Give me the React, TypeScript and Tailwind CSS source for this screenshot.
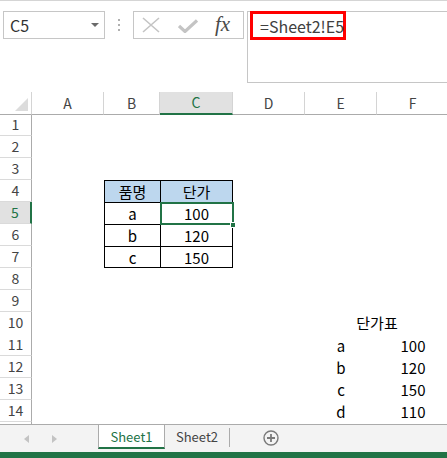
import React from "react";

const COLS = "grid grid-cols-[32px_72px_56px_73px_72px_72px_72px]";

type Cell = { text?: string; cls?: string };

function rowCells(n: number): Cell[] {
  const empty: Cell[] = [{}, {}, {}, {}, {}, {}];
  const tB = "border-l border-t border-black";
  const tC = "border-l border-r border-t border-black";
  if (n === 4)
    return [{}, { text: "품명", cls: tB + " bg-[#bdd7ee]" }, { text: "단가", cls: tC + " bg-[#bdd7ee]" }, {}, {}, {}];
  if (n === 5) return [{}, { text: "a", cls: tB }, { text: "100", cls: tC }, {}, {}, {}];
  if (n === 6) return [{}, { text: "b", cls: tB }, { text: "120", cls: tC }, {}, {}, {}];
  if (n === 7) return [{}, { text: "c", cls: tB + " border-b" }, { text: "150", cls: tC + " border-b" }, {}, {}, {}];
  const right: Record<number, [string, string]> = {
    11: ["a", "100"],
    12: ["b", "120"],
    13: ["c", "150"],
    14: ["d", "110"],
  };
  if (right[n]) return [{}, {}, {}, {}, { text: right[n][0] }, { text: right[n][1] }];
  return empty;
}

function Row({ n }: { n: number }) {
  const sel = n === 5;
  if (n === 10) {
    return (
      <div className={COLS + " h-[22px]"}>
        <RowHead n={n} sel={false} />
        <div />
        <div />
        <div />
        <div />
        <div className="col-span-2 flex items-center justify-center text-[15px] text-black">단가표</div>
      </div>
    );
  }
  const cells = rowCells(n);
  return (
    <div className={COLS + " h-[22px]"}>
      <RowHead n={n} sel={sel} />
      {cells.map((c, i) => (
        <div
          key={i}
          className={
            "relative flex items-center justify-center text-[15px] text-black leading-none " + (c.cls ?? "")
          }
        >
          {c.text}
          {sel && i === 2 && (
            <div className="absolute -left-px -top-px w-[74px] h-[23px] border-2 border-[#217346] z-10">
              <div className="absolute left-[68px] top-[18px] w-[6px] h-[6px] bg-[#217346] border border-white" />
            </div>
          )}
        </div>
      ))}
    </div>
  );
}

function RowHead({ n, sel }: { n: number; sel: boolean }) {
  return (
    <div
      className={
        "flex items-center justify-center text-[14px] border-b border-[#dadada] " +
        (sel
          ? "bg-[#e1e1e1] text-[#217346] border-r-2 border-r-[#217346]"
          : "bg-white text-[#444444] border-r border-r-[#ababab]")
      }
    >
      {n <= 14 ? n : ""}
    </div>
  );
}

function ColHead({ label, sel }: { label: string; sel?: boolean }) {
  return (
    <div
      className={
        "flex items-center justify-center text-[14px] " +
        (sel
          ? "bg-[#e1e1e1] text-[#217346] border-b-2 border-[#217346] border-r border-r-[#d4d4d4]"
          : "bg-white text-[#444444] border-b border-[#ababab] border-r border-r-[#d4d4d4]")
      }
    >
      {label}
    </div>
  );
}

export default function App() {
  const rows = Array.from({ length: 15 }, (_, i) => i + 1);
  return (
    <div className="w-[447px] h-[458px] overflow-hidden bg-white font-['Noto_Sans_CJK_KR',sans-serif] flex flex-col">
      {/* Formula area */}
      <div className="h-[92px] shrink-0 border-t border-[#d5d5d5] flex items-start pt-[10px]">
        <div className="ml-[3px] w-[102px] h-[28px] border border-[#c6c6c6] flex items-center justify-between pl-[6px] pr-[5px]">
          <span className="text-[16px] text-[#333333] leading-none">C5</span>
          <svg width="8" height="4" viewBox="0 0 8 4">
            <polygon points="0,0 8,0 4,4" fill="#6a6a6a" />
          </svg>
        </div>
        <div className="ml-[13px] mt-[8px] flex flex-col gap-[3px]">
          <div className="w-[2px] h-[2px] bg-[#b0b0b0]" />
          <div className="w-[2px] h-[2px] bg-[#b0b0b0]" />
          <div className="w-[2px] h-[2px] bg-[#b0b0b0]" />
        </div>
        <div className="ml-[13px] w-[111px] h-[28px] border border-[#c6c6c6] flex items-center">
          <svg className="ml-[8px]" width="18" height="16" viewBox="0 0 18 16">
            <path d="M1 1 L17 15 M17 1 L1 15" stroke="#c4c4c4" strokeWidth="1.6" fill="none" />
          </svg>
          <svg className="ml-[18px] mt-[2px]" width="20" height="14" viewBox="0 0 20 14">
            <path d="M1 7 L7 12.5 L19 1.5" stroke="#c4c4c4" strokeWidth="3.2" fill="none" />
          </svg>
          <span className="ml-[17px] font-['Liberation_Serif',serif] italic text-[21px] leading-none text-[#4a4a4a] -mt-[2px]">
            fx
          </span>
        </div>
        <div className="relative ml-[3px] flex-1 h-[72px] border border-[#c6c6c6] border-r-0">
          <div className="absolute left-[2px] -top-px w-[96px] h-[29px] border-[3px] border-[#ff0000]" />
          <span className="absolute left-[12px] top-[4px] text-[16px] text-[#404040] leading-[20px]">=Sheet2!E5</span>
        </div>
      </div>

      {/* Column headers */}
      <div className={COLS + " h-[22px] shrink-0"}>
        <div className="relative bg-white border-b border-[#ababab] border-r border-r-[#d4d4d4]">
          <svg className="absolute right-[3px] bottom-[3px]" width="13" height="13" viewBox="0 0 13 13">
            <polygon points="13,0 13,13 0,13" fill="#dcdcdc" />
          </svg>
        </div>
        <ColHead label="A" />
        <ColHead label="B" />
        <ColHead label="C" sel />
        <ColHead label="D" />
        <ColHead label="E" />
        <ColHead label="F" />
      </div>

      {/* Rows */}
      <div className="h-[310px] shrink-0 overflow-hidden">
        {rows.map((n) => (
          <Row key={n} n={n} />
        ))}
      </div>

      {/* Sheet tabs */}
      <div className="h-[28px] shrink-0 bg-[#f3f3f3] border-t border-[#ababab] flex items-start">
        <div className="w-[98px] h-[27px] flex items-center">
          <svg className="ml-[24px]" width="5" height="8" viewBox="0 0 5 8">
            <polygon points="5,0 5,8 0,4" fill="#c3c3c3" />
          </svg>
          <svg className="ml-[23px]" width="5" height="8" viewBox="0 0 5 8">
            <polygon points="0,0 0,8 5,4" fill="#c3c3c3" />
          </svg>
        </div>
        <div className="w-[67px] h-[24px] bg-white border-l border-r border-[#ababab] border-b-2 border-b-[#217346] flex items-center justify-center text-[13px] text-[#217346] leading-none">
          Sheet1
        </div>
        <div className="w-[64px] h-[22px] flex items-center justify-center text-[13px] text-[#444444] leading-none">
          Sheet2
        </div>
        <div className="w-px h-[19px] mt-[3px] bg-[#ababab]" />
        <svg className="ml-[33px] mt-[5px]" width="16" height="16" viewBox="0 0 16 16">
          <circle cx="8" cy="8" r="7" stroke="#7a7a7a" strokeWidth="1.4" fill="none" />
          <path d="M8 4 V12 M4 8 H12" stroke="#7a7a7a" strokeWidth="1.8" />
        </svg>
      </div>
      <div className="h-[6px] shrink-0 bg-[#217346]" />
    </div>
  );
}
